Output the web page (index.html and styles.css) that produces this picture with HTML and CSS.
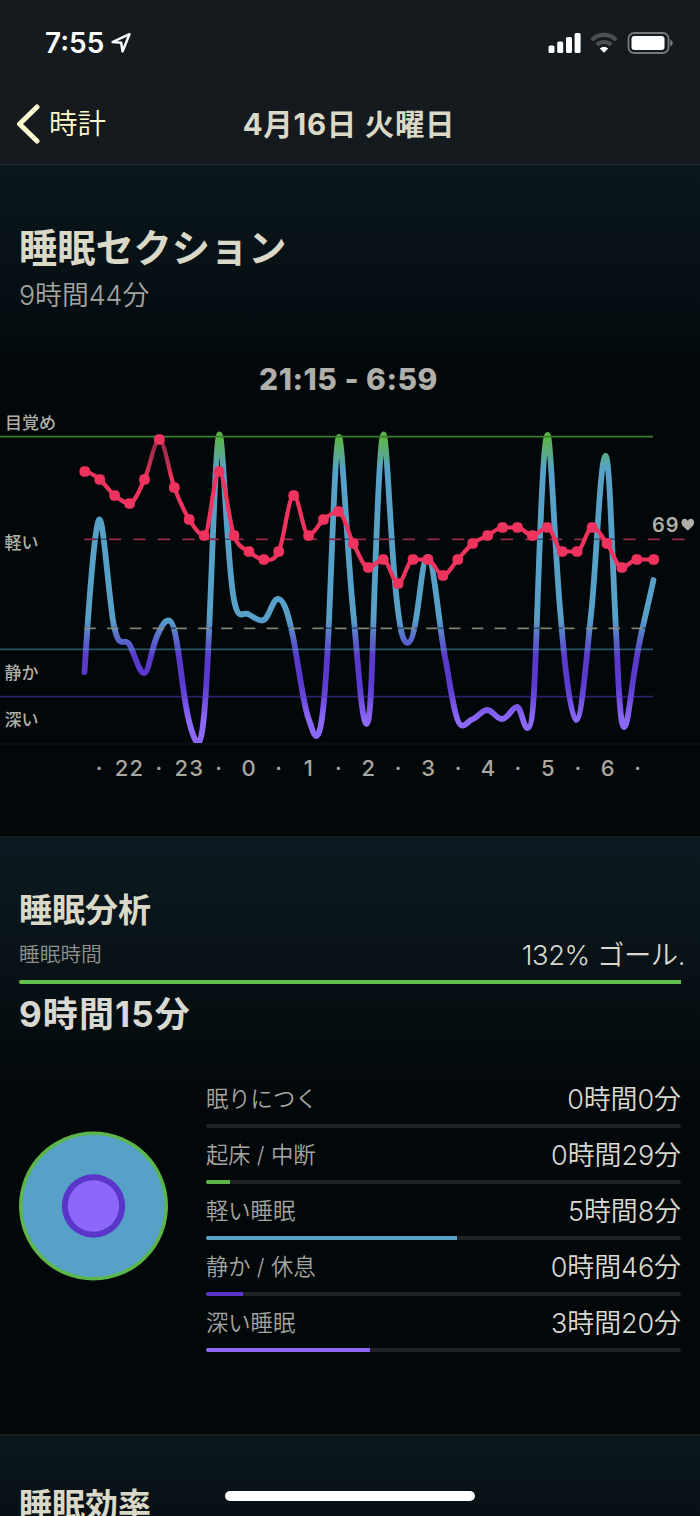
FILE: index.html
```html
<!DOCTYPE html>
<html lang="ja">
<head>
  <meta charset="UTF-8" />
  <meta name="viewport" content="width=device-width, initial-scale=1.0"/>
  <title>4月16日 火曜日</title>
  <link rel="stylesheet" href="styles.css">
</head>
<body>
  <div class="screen">
    <header class="header">
      <div class="status-bar">
        <div class="status-left">
          <span class="time">7:55</span>
          <svg class="location" width="20" height="20" viewBox="0 0 20 20">
            <path d="M1.5 9 L18.5 1.2 L11.5 18.5 L10.2 9.8 Z" />
          </svg>
        </div>
        <div class="status-right">
          <svg width="33" height="22" viewBox="0 0 33 22" fill="#fff">
            <rect x="0.5" y="13.5" width="6" height="7.5" rx="1.6" />
            <rect x="9.2" y="9.5" width="6" height="11.5" rx="1.6" />
            <rect x="18" y="5" width="6" height="16" rx="1.6" />
            <rect x="26.6" y="1" width="6" height="20" rx="1.6" />
          </svg>
          <svg width="28" height="22" viewBox="0 0 28 22">
            <path class="wifi-off" d="M1.8 8 A17.3 17.3 0 0 1 26.2 8" />
            <path class="wifi-off" d="M6.8 13 A10.2 10.2 0 0 1 21.2 13" />
            <path fill="#fff" d="M14 20.8 L9.8 16.6 Q14 12.8 18.2 16.6 Z" />
          </svg>
          <svg width="46" height="22" viewBox="0 0 46 22">
            <rect class="battery-shell" x="1.5" y="1" width="40" height="20" rx="5.5" />
            <rect x="4.5" y="4" width="33" height="14" rx="3" fill="#fff" />
            <path d="M43.2 7.5 Q45.8 8.6 45.8 11 Q45.8 13.4 43.2 14.5 Z" fill="#75797b" />
          </svg>
        </div>
      </div>
      <nav class="nav">
        <a class="back">
          <svg width="26" height="40" viewBox="0 0 26 40">
            <path d="M22 3 L4.5 20 L22 37" />
          </svg>
          <span>時計</span>
        </a>
        <h1 class="nav-title">4月16日 火曜日</h1>
        <span></span>
      </nav>
    </header>

    <section class="section section-sleep">
      <h2 class="title-large">睡眠セクション</h2>
      <p class="duration">9時間44分</p>
    </section>

    <section class="chart">
      <div class="chart-range">21:15 - 6:59</div>
      <svg class="chart-svg" width="700" height="390" viewBox="0 400 700 390">
        <defs>
          <linearGradient id="sleepGradient" gradientUnits="userSpaceOnUse" x1="0" y1="430" x2="0" y2="745">
            <stop offset="0.03" stop-color="#5bb54b" />
            <stop offset="0.125" stop-color="#57a0c8" />
            <stop offset="0.6" stop-color="#57a0c8" />
            <stop offset="0.72" stop-color="#5a38cb" />
            <stop offset="0.81" stop-color="#5d3ad0" />
            <stop offset="0.92" stop-color="#8b68f7" />
          </linearGradient>
          <linearGradient id="heartGradient" gradientUnits="userSpaceOnUse" x1="0" y1="438" x2="0" y2="500">
            <stop offset="0" stop-color="#8d2743" />
            <stop offset="0.5" stop-color="#ce3055" />
            <stop offset="0.6" stop-color="#ee345e" />
          </linearGradient>
          <clipPath id="plotArea">
            <rect x="0" y="400" width="700" height="343" />
          </clipPath>
        </defs>

        <path class="sleep-line" clip-path="url(#plotArea)" d="M84.5 672
          C90 585 95.5 519.5 99.5 519.5 C103.5 519.5 108 590 113.5 624
          C116.5 637 118 642 122.5 642 C129 640 130 645 134 655 C138 665 140.5 673 144 673
          C149 673 152 645 158 634 C162 625 165 620.5 168.5 620.5
          C176 620 179 660 184.5 697 C188 722 194.5 743 198 743
          C203 743 206 700 209 633 C213 540 216 434.5 219.5 434.5
          C223 434.5 226.5 550 233 594 C235.5 610 238 614.5 241 614.5 C245 614 246 612.5 249 614.5
          C254 617 257 620.5 262 620.5 C269 620.5 272 599 278 599
          C285 599 290 622 293.5 639 C299 669 303 702 308 717 C311 725 313.5 736 316.5 736
          C322 736 325.500 690 328.5 633 C332.5 540 335.5 437 339 437
          C342.5 437 347 555 354 620 C358 665 362 724 366.5 724
          C370 724 371.5 690 373.5 620 C376.5 530 380 434.5 383.5 434.5
          C387 434.5 391 555 397 602 C400 630 403 643 407.5 643
          C418 643 420.5 557 427.5 557 C434 557 439 630 446 662 C451 690 455.500 725 462 725.5
          C466 726 468 721 472 719.5 C477 718 482 710 487 710 C493 710 496 719 502 719
          C508 719 512 707 517 707 C521 707 523.5 728 527.5 728
          C533 728 534.5 690 536.5 633 C540 530 543.5 435 547.5 435
          C551 435 555 560 561 620 C565 670 571 720 576 720
          C582 720 587 650 592 605 C597 550 600.5 456 605.5 456
          C610 456 612 560 616.5 640 C618.5 690 620.5 727 624 727
          C628 727 631 690 636 662 C640 635 646 615 653.5 580" />

        <line x1="0" x2="653" y1="436.7" y2="436.7" class="level level-awake" />
        <line x1="0" x2="653" y1="649.3" y2="649.3" class="level level-light" />
        <line x1="0" x2="653" y1="696.7" y2="696.7" class="level level-deep" />
        <line x1="0" x2="700" y1="744" y2="744" class="level level-base" />
        <line x1="84" x2="689" y1="539.3" y2="539.3" class="avg-shade" />
        <line x1="84" x2="653" y1="628.3" y2="628.3" class="avg-shade" />
        <line x1="84.3" x2="689" y1="539.3" y2="539.3" class="avg avg-heart" />
        <line x1="84.3" x2="645" y1="628.3" y2="628.3" class="avg avg-sleep" />

        <path id="heartLine" class="heart-line" />
        <g id="heartDots" class="heart-dots"></g>

        <g class="level-labels">
          <text x="5" y="429">目覚め</text>
          <text x="4.5" y="548.5">軽い</text>
          <text x="4.5" y="679">静か</text>
          <text x="4.5" y="726">深い</text>
        </g>
        <text class="heart-value" x="652" y="532">69</text>
        <path class="heart-icon" d="M687.8 530.5 C684.5 527.8 681.5 525.5 681.5 522.5 C681.5 518.3 686 517.5 687.8 520.8 C689.6 517.5 694.1 518.3 694.1 522.5 C694.1 525.5 691 527.8 687.8 530.5 Z" />
        <g id="hours" class="hours"></g>
      </svg>
    </section>

    <section class="section section-analysis">
      <h2 class="title">睡眠分析</h2>
      <div class="goal-row">
        <span class="goal-label">睡眠時間</span>
        <span class="goal-value">132% ゴール.</span>
      </div>
      <div class="goal-bar"></div>
      <div class="total">9時間15分</div>

      <div class="breakdown">
        <svg class="rings" width="150" height="150" viewBox="0 0 150 150">
          <circle cx="74.5" cy="75" r="74.5" fill="#5bb54b" />
          <circle cx="74.5" cy="75" r="71" fill="#57a0c8" />
          <circle cx="74.5" cy="75" r="31.7" fill="#5936c9" />
          <circle cx="74.5" cy="75" r="25.7" fill="#8b68f7" />
        </svg>
        <div class="stages">
          <div class="stage">
            <div class="stage-row"><span class="stage-name">眠りにつく</span><span class="stage-time">0時間0分</span></div>
            <div class="track"></div>
          </div>
          <div class="stage">
            <div class="stage-row"><span class="stage-name">起床 / 中断</span><span class="stage-time">0時間29分</span></div>
            <div class="track"><div class="fill awake" style="width: 5.1%"></div></div>
          </div>
          <div class="stage">
            <div class="stage-row"><span class="stage-name">軽い睡眠</span><span class="stage-time">5時間8分</span></div>
            <div class="track"><div class="fill light" style="width: 52.9%"></div></div>
          </div>
          <div class="stage">
            <div class="stage-row"><span class="stage-name">静か / 休息</span><span class="stage-time">0時間46分</span></div>
            <div class="track"><div class="fill quiet" style="width: 7.8%"></div></div>
          </div>
          <div class="stage">
            <div class="stage-row"><span class="stage-name">深い睡眠</span><span class="stage-time">3時間20分</span></div>
            <div class="track"><div class="fill deep" style="width: 34.5%"></div></div>
          </div>
        </div>
      </div>
    </section>

    <section class="section section-efficiency">
      <h2 class="title">睡眠効率</h2>
    </section>

    <div class="home-indicator"></div>
  </div>

  <script src="chart.js"></script>
</body>
</html>
```
FILE: styles.css
```css
* {
  box-sizing: border-box;
}

body {
  margin: 0;
  background: #020709;
  color: #d9d9d2;
  font-family: Inter, "Noto Sans CJK JP", sans-serif;
}

h1, h2, p {
  margin: 0;
}

.screen {
  position: relative;
  width: 700px;
  height: 1516px;
  overflow: hidden;
}

/* Header */
.header {
  height: 165px;
  background: #151a1e;
  border-bottom: 1px solid #2b2e30;
}

.status-bar {
  height: 84px;
  display: flex;
  justify-content: space-between;
  padding: 26px 27px 0 45px;
}

.status-left,
.status-right {
  display: flex;
  height: 34px;
  align-items: center;
}

.status-left {
  gap: 7px;
}

.status-right {
  gap: 9px;
}

.time {
  color: #fff;
  font-size: 28px;
  font-weight: 600;
}

.location {
  fill: none;
  stroke: #fff;
  stroke-width: 2.4;
  stroke-linejoin: round;
}

.wifi-off {
  fill: none;
  stroke: #4c5053;
  stroke-width: 4.2;
}

.battery-shell {
  fill: none;
  stroke: #75797b;
  stroke-width: 1.8;
}

.nav {
  height: 80px;
  display: grid;
  grid-template-columns: 1fr auto 1fr;
  align-items: center;
  padding: 0 17px 0 15px;
}

.back {
  display: flex;
  align-items: center;
  gap: 8px;
  color: #fdfbcd;
  font-size: 28.5px;
  font-weight: 350;
  line-height: 40px;
}

.back path {
  fill: none;
  stroke: #fdfbcd;
  stroke-width: 5;
  stroke-linecap: round;
  stroke-linejoin: round;
}

.nav-title {
  color: #dad9c8;
  font-size: 29.5px;
  font-weight: 700;
  letter-spacing: 0.7px;
  line-height: 40px;
  white-space: nowrap;
}

/* Sections */
.section {
  padding: 0 19px;
  background: linear-gradient(#0b181e, #020709);
}

.section-sleep {
  height: 188px;
  padding-top: 55px;
  background: linear-gradient(#0a171d, #040b0f);
}

.title-large {
  color: #dad9c8;
  font-size: 38.2px;
  font-weight: 700;
  line-height: 56px;
}

.duration {
  color: #a5a5a1;
  font-size: 26.8px;
  font-weight: 350;
  line-height: 38px;
}

/* Chart */
.chart {
  height: 483px;
  background: #020709;
}

.chart-range {
  height: 47px;
  padding: 6px 3px 0 0;
  color: #b0afa9;
  font-size: 30px;
  font-weight: 800;
  letter-spacing: 0.5px;
  line-height: 40px;
  text-align: center;
}

.chart-svg {
  display: block;
}

.sleep-line {
  fill: none;
  stroke: url(#sleepGradient);
  stroke-width: 5.8;
  stroke-linecap: round;
}

.level {
  stroke-width: 1.7;
}

.level-awake {
  stroke: #3b7d31;
}

.level-light {
  stroke: #57a0c8;
  stroke-opacity: 0.5;
}

.level-deep {
  stroke: #5d3ad0;
  stroke-opacity: 0.5;
}

.level-base {
  stroke: #0a1317;
}

.avg-shade {
  stroke: #04121c;
  stroke-opacity: 0.5;
  stroke-width: 1.6;
}

.avg {
  stroke-width: 1.8;
}

.avg-heart {
  stroke: #96294a;
  stroke-dasharray: 12.3 12.2;
}

.avg-sleep {
  stroke: #aaa991;
  stroke-opacity: 0.75;
  stroke-dasharray: 11.4 11.4;
}

.heart-line {
  fill: none;
  stroke: url(#heartGradient);
  stroke-width: 4.2;
  stroke-linejoin: round;
}

.heart-dots rect {
  fill: #ee345e;
}

.level-labels text {
  fill: #b0afa9;
  font-size: 17px;
  font-weight: 500;
}

.heart-value {
  fill: #b0afa9;
  font-size: 20px;
  font-weight: 600;
  letter-spacing: 1px;
}

.heart-icon {
  fill: #b0afa9;
}

.hours text {
  fill: #a9a8a2;
  font-size: 22px;
  font-weight: 550;
  letter-spacing: 1px;
  text-anchor: middle;
}

/* Analysis */
.section-analysis {
  height: 598px;
  padding-top: 48px;
  border-top: 2px solid #171b1d;
  background: linear-gradient(#0b1a21 0, #091419 100px, #020709 270px);
}

.title {
  color: #dad9c8;
  font-size: 33px;
  font-weight: 700;
  line-height: 48px;
}

.goal-row {
  display: flex;
  height: 38px;
  justify-content: space-between;
  align-items: center;
  margin-right: -4px;
}

.goal-label {
  color: #8f908d;
  font-size: 20.7px;
  font-weight: 350;
}

.goal-value {
  font-size: 27.3px;
  font-weight: 350;
  letter-spacing: -0.4px;
}

.goal-bar {
  width: 662px;
  height: 4px;
  margin-top: 8px;
  border-radius: 2px 0 0 2px;
  background: #62c04f;
}

.total {
  margin-top: 4px;
  font-size: 35px;
  font-weight: 650;
  letter-spacing: 1.1px;
  line-height: 52px;
}

.breakdown {
  display: flex;
  margin-top: 32px;
  gap: 37px;
}

.rings {
  flex: none;
  margin-top: 59px;
}

.stages {
  width: 475px;
}

.stage {
  height: 56px;
}

.stage-row {
  display: flex;
  height: 52px;
  padding-bottom: 2px;
  justify-content: space-between;
  align-items: center;
}

.stage-name {
  color: #a5a5a1;
  font-size: 22.3px;
  font-weight: 350;
}

.stage-time {
  font-size: 27px;
  font-weight: 350;
  letter-spacing: -0.1px;
}

.track {
  height: 4px;
  border-radius: 2px;
  background: #202122;
  overflow: hidden;
}

.fill {
  height: 100%;
}

.awake {
  background: #5bb54b;
}

.light {
  background: #57a0c8;
}

.quiet {
  background: #5936c9;
}

.deep {
  background: #8b68f7;
}

/* Efficiency */
.section-efficiency {
  height: 180px;
  padding-top: 45px;
  border-top: 2px solid #171b1d;
}

.home-indicator {
  position: absolute;
  left: 225px;
  bottom: 15px;
  width: 250px;
  height: 10px;
  border-radius: 5px;
  background: #fff;
}
```
FILE: chart.js
```js
const svgNS = "http://www.w3.org/2000/svg";

const heart = [
  471.5, 479.5, 495.5, 503.5, 479.5, 439.5, 487.5, 519.5, 535.5, 471.5,
  535.5, 551.5, 559.5, 551.5, 495.5, 535.5, 519.5, 511.5, 543.5, 567.5,
  559.5, 583.5, 559.5, 559.5, 575.5, 559.5, 543.5, 535.5, 527.5, 527.5,
  535.5, 527.5, 551.5, 551.5, 527.5, 543.5, 567.5, 559.5, 559.5
];
const hours = ["·", "22", "·", "23", "·", "0", "·", "1", "·", "2", "·", "3", "·", "4", "·", "5", "·", "6", "·"];

const points = heart.map((y, i) => [i === heart.length - 1 ? 653.7 : 84.8 + i * 14.92, y]);

// Slope is flat at peaks and valleys so the line never overshoots a dot
function slope(i) {
  if (i === 0 || i === points.length - 1) return 0;
  const before = points[i][1] - points[i - 1][1];
  const after = points[i + 1][1] - points[i][1];
  return before * after <= 0 ? 0 : (before + after) / 2;
}

function drawHeart() {
  let d = `M${points[0][0]} ${points[0][1]}`;
  for (let i = 1; i < points.length; i++) {
    const [x0, y0] = points[i - 1];
    const [x1, y1] = points[i];
    const k = (x1 - x0) / 3;
    d += ` C${x0 + k} ${y0 + slope(i - 1) / 3} ${x1 - k} ${y1 - slope(i) / 3} ${x1} ${y1}`;
  }
  document.getElementById("heartLine").setAttribute("d", d);

  const dots = document.getElementById("heartDots");
  points.forEach(([x, y]) => {
    const dot = document.createElementNS(svgNS, "rect");
    dot.setAttribute("x", x - 5.3);
    dot.setAttribute("y", y - 5.3);
    dot.setAttribute("width", 10.6);
    dot.setAttribute("height", 10.6);
    dot.setAttribute("rx", 4.4);
    dots.appendChild(dot);
  });
}

function drawHours() {
  const group = document.getElementById("hours");
  hours.forEach((hour, i) => {
    const text = document.createElementNS(svgNS, "text");
    text.setAttribute("x", 99.5 + i * 29.92);
    text.setAttribute("y", 775.5);
    text.textContent = hour;
    group.appendChild(text);
  });
}

drawHeart();
drawHours();
```
